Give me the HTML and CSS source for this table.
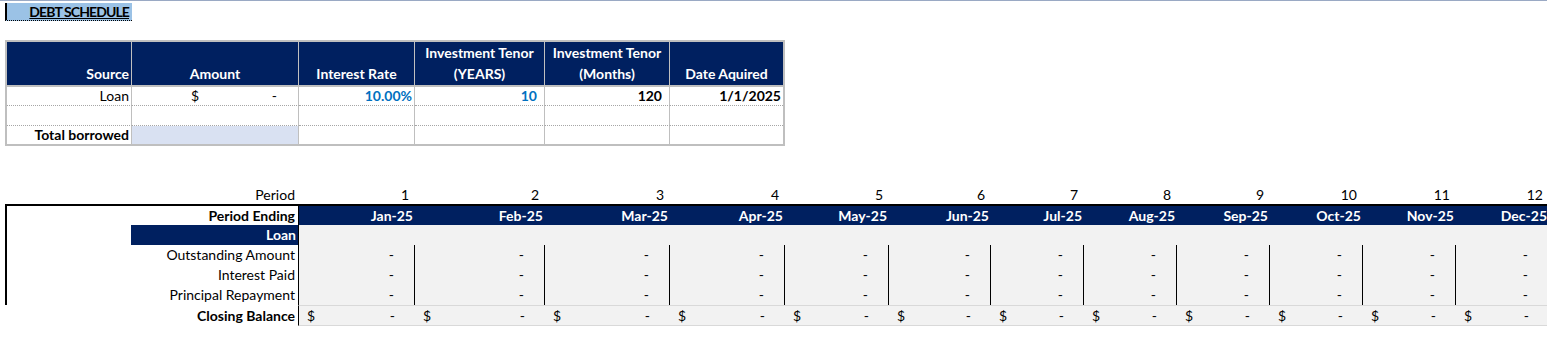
FILE: index.html
```html
<!DOCTYPE html>
<html>
<head>
<meta charset="utf-8">
<title>Debt Schedule</title>
<link rel="stylesheet" href="styles.css">
</head>
<body>
<div class="topline"></div>
<div class="title">DEBT SCHEDULE</div>

<div class="src">
  <div class="hd right">Source</div>
  <div class="hd">Amount</div>
  <div class="hd">Interest Rate</div>
  <div class="hd"><span>Investment Tenor</span><span>(YEARS)</span></div>
  <div class="hd"><span>Investment Tenor</span><span>(Months)</span></div>
  <div class="hd">Date Aquired</div>

  <div class="cell r1 right">Loan</div>
  <div class="cell r1 amt"><span>$</span><span>-</span></div>
  <div class="cell r1 right blue b">10.00%</div>
  <div class="cell r1 right blue b pad7">10</div>
  <div class="cell r1 right b pad7">120</div>
  <div class="cell r1 right b">1/1/2025</div>

  <div class="cell r2"></div>
  <div class="cell r2"></div>
  <div class="cell r2"></div>
  <div class="cell r2"></div>
  <div class="cell r2"></div>
  <div class="cell r2"></div>

  <div class="cell r3 right b">Total borrowed</div>
  <div class="cell r3 lav"></div>
  <div class="cell r3"></div>
  <div class="cell r3"></div>
  <div class="cell r3"></div>
  <div class="cell r3"></div>
</div>

<div class="sched">
  <div class="row period">
    <div class="lab">Period</div>
    <div class="num">1</div><div class="num">2</div><div class="num">3</div><div class="num">4</div>
    <div class="num">5</div><div class="num">6</div><div class="num">7</div><div class="num">8</div>
    <div class="num">9</div><div class="num">10</div><div class="num">11</div><div class="num">12</div>
  </div>
  <div class="box">
    <div class="row pe">
      <div class="lab b edge">Period Ending</div>
      <div class="mon first">Jan-25</div><div class="mon">Feb-25</div><div class="mon">Mar-25</div><div class="mon">Apr-25</div>
      <div class="mon">May-25</div><div class="mon">Jun-25</div><div class="mon">Jul-25</div><div class="mon">Aug-25</div>
      <div class="mon">Sep-25</div><div class="mon">Oct-25</div><div class="mon">Nov-25</div><div class="mon">Dec-25</div>
    </div>
    <div class="row loan">
      <div class="blank edge"></div>
      <div class="loanlab">Loan</div>
      <div class="g first"></div><div class="g"></div><div class="g"></div><div class="g"></div>
      <div class="g"></div><div class="g"></div><div class="g"></div><div class="g"></div>
      <div class="g"></div><div class="g"></div><div class="g"></div><div class="g"></div>
    </div>
    <div class="row mid">
      <div class="lab edge">Outstanding Amount</div>
      <div class="d first">-</div><div class="d">-</div><div class="d">-</div><div class="d">-</div>
      <div class="d">-</div><div class="d">-</div><div class="d">-</div><div class="d">-</div>
      <div class="d">-</div><div class="d">-</div><div class="d">-</div><div class="d">-</div>
    </div>
    <div class="row mid">
      <div class="lab edge">Interest Paid</div>
      <div class="d first">-</div><div class="d">-</div><div class="d">-</div><div class="d">-</div>
      <div class="d">-</div><div class="d">-</div><div class="d">-</div><div class="d">-</div>
      <div class="d">-</div><div class="d">-</div><div class="d">-</div><div class="d">-</div>
    </div>
    <div class="row mid">
      <div class="lab edge">Principal Repayment</div>
      <div class="d first">-</div><div class="d">-</div><div class="d">-</div><div class="d">-</div>
      <div class="d">-</div><div class="d">-</div><div class="d">-</div><div class="d">-</div>
      <div class="d">-</div><div class="d">-</div><div class="d">-</div><div class="d">-</div>
    </div>
  </div>
  <div class="row closing">
    <div class="lab b">Closing Balance</div>
    <div class="c first"><span>$</span><span>-</span></div><div class="c"><span>$</span><span>-</span></div>
    <div class="c"><span>$</span><span>-</span></div><div class="c"><span>$</span><span>-</span></div>
    <div class="c"><span>$</span><span>-</span></div><div class="c"><span>$</span><span>-</span></div>
    <div class="c"><span>$</span><span>-</span></div><div class="c"><span>$</span><span>-</span></div>
    <div class="c"><span>$</span><span>-</span></div><div class="c"><span>$</span><span>-</span></div>
    <div class="c"><span>$</span><span>-</span></div><div class="c"><span>$</span><span>-</span></div>
  </div>
</div>
</body>
</html>
```

FILE: styles.css
```css
html, body {
  margin: 0;
  padding: 0;
  overflow: hidden;
  background: #ffffff;
}
body {
  width: 1547px;
  height: 347px;
  font-family: Lato, "Liberation Sans", sans-serif;
  font-size: 14px;
  color: #000000;
}
* { box-sizing: border-box; }

.topline {
  height: 1px;
  background: #9aa9c4;
}
.title {
  margin: 2px 0 0 5px;
  width: 127px;
  height: 18px;
  background: #9bc2e6;
  border-left: 2px solid #000;
  border-bottom: 1px dotted #000;
  font-weight: 700;
  text-decoration: underline;
  text-align: right;
  padding-right: 3px;
  line-height: 17px;
  letter-spacing: -0.9px;
}

/* source table */
.src {
  margin: 19px 0 0 5px;
  width: 780px;
  border: 2px solid #bfbfbf;
  display: grid;
  grid-template-columns: 125px 167px 116px 130px 125px 113px;
}
.src > div {
  border-right: 1px solid #bfbfbf;
  white-space: nowrap;
}
.src > div:nth-child(6n) { border-right: 0; }
.hd {
  height: 45px;
  background: #002060;
  color: #ffffff;
  font-weight: 700;
  border-bottom: 2px solid #bfbfbf;
  display: flex;
  flex-direction: column;
  justify-content: flex-end;
  align-items: center;
  line-height: 21px;
  padding-bottom: 1px;
}
.hd.right { align-items: flex-end; padding-right: 2px; }
.cell { line-height: 18px; padding-right: 2px; }
.cell.r1 { height: 19px; border-bottom: 1px dotted #a6a6a6; }
.cell.r2 { height: 20px; border-bottom: 1px dotted #a6a6a6; }
.cell.r3 { height: 18px; }
.right { text-align: right; }
.b { font-weight: 700; }
.blue { color: #0070c0; }
.pad7 { padding-right: 7px !important; }
.lav { background: #d9e1f2; }
.amt {
  display: flex;
  justify-content: space-between;
  padding-left: 59px;
  padding-right: 21px !important;
}

/* schedule */
.sched {
  margin: 40px 0 0 5px;
  width: 1544px;
}
.row {
  display: grid;
  grid-template-columns: 126px 167px 117px 130px 125px 115px 104px 102px 93px 93px 93px 93px 93px 93px;
  white-space: nowrap;
}
.box { border-top: 2px solid #000000; }
.lab {
  grid-column: span 2;
  text-align: right;
  padding-right: 3px;
}
.edge { border-left: 2px solid #000000; }
.first { border-left: 1px solid #000000; }

.period { height: 18px; line-height: 18px; }
.num { text-align: right; padding-right: 6px; }

.pe { height: 19px; line-height: 19px; }
.mon {
  background: #002060;
  color: #ffffff;
  font-weight: 700;
  text-align: right;
  padding-right: 2px;
}

.loan { height: 20px; line-height: 20px; }
.loanlab {
  background: #002060;
  color: #ffffff;
  font-weight: 700;
  text-align: right;
  padding-right: 2px;
}
.g { background: #f2f2f2; }

.mid { height: 20px; line-height: 20px; }
.d {
  background: #f2f2f2;
  border-right: 1px solid #000000;
  text-align: right;
  padding-right: 20px;
}

.closing { height: 21px; line-height: 19px; }
.closing .lab {
  border-top: 1px solid transparent;
  border-bottom: 1px solid transparent;
}
.c {
  background: #f2f2f2;
  border-top: 1px solid #d9d9d9;
  border-bottom: 1px solid #d9d9d9;
  display: flex;
  justify-content: space-between;
  padding-left: 8px;
  padding-right: 20px;
}
```
